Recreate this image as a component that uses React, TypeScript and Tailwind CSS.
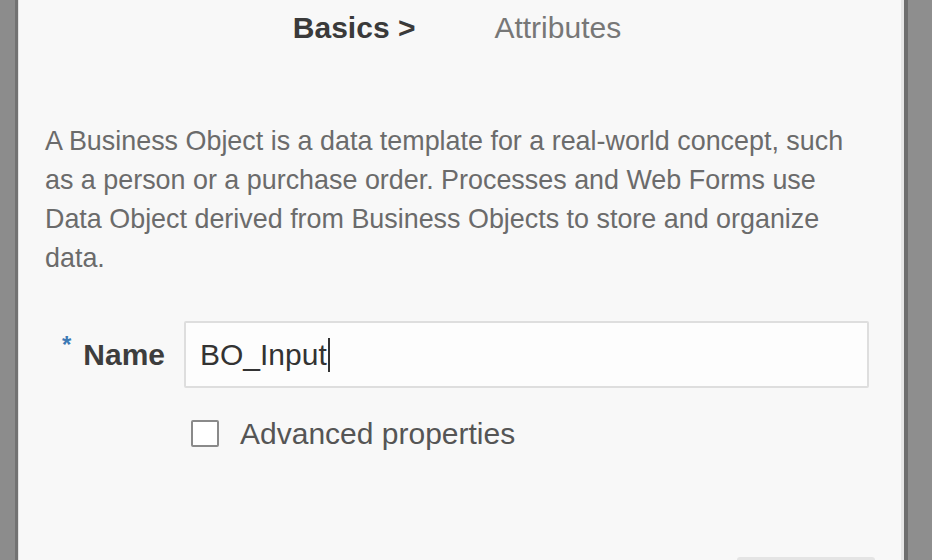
import { useState } from "react";

export default function App() {
  const [name, setName] = useState("BO_Input");
  const [advanced, setAdvanced] = useState(false);

  return (
    <div
      className="flex h-[560px] w-[932px] overflow-hidden bg-[#8e8e8e]"
      style={{ fontFamily: '"Liberation Sans", Arial, sans-serif' }}
    >
      {/* Backdrop, left */}
      <div className="w-[15px] shrink-0 bg-[#8c8c8c]" />
      <div className="w-[3px] shrink-0 bg-[#727272]" />
      <div className="w-px shrink-0 bg-[#e2e2e2]" />

      {/* Dialog */}
      <div className="flex w-[882px] shrink-0 flex-col bg-[#f8f8f8]">
        {/* Steps */}
        <div className="flex h-[56px] items-center justify-center gap-[79px] pr-[6px] text-[30px] leading-[34px]">
          <span className="font-bold text-[#3a3a3a]">Basics &gt;</span>
          <span className="text-[#777]">Attributes</span>
        </div>

        {/* Description */}
        <p className="mt-[66px] pl-[26px] pr-[30px] text-[26.9px] leading-[39px] text-[#6b6b6b]">
          A Business Object is a data template for a real-world concept, such as a person or a
          purchase order. Processes and Web Forms use Data Object derived from Business Objects to
          store and organize data.
        </p>

        {/* Name */}
        <div className="mt-[43px] flex items-center pr-[32px]">
          <label className="flex w-[165px] shrink-0 items-center justify-end pr-[19px] text-[30px] font-bold text-[#3d3d3d]">
            <span className="mr-[12px] -mt-[20px] text-[24px] leading-none text-[#3d7ab5]">*</span>
            Name
          </label>
          <div className="flex h-[67px] flex-1 items-center rounded-[2px] border-2 border-[#dedede] bg-[#fdfdfd] px-[14px]">
            <input
              value={name}
              onChange={(e) => setName(e.target.value)}
              className="w-[128px] bg-transparent text-[30px] text-[#333] outline-none"
            />
            <span className="h-[34px] w-[2px] bg-[#333]" />
          </div>
        </div>

        {/* Advanced */}
        <label className="mt-[25px] ml-[172px] flex h-[40px] items-center gap-[21px] text-[30px] text-[#555]">
          <span
            onClick={() => setAdvanced(!advanced)}
            className="flex h-[27px] w-[28px] items-center justify-center rounded-[2px] border-2 border-[#8a8a8a] bg-white"
          >
            {advanced && <span className="h-[13px] w-[13px] bg-[#555]" />}
          </span>
          Advanced properties
        </label>

        {/* Footer */}
        <div className="mt-auto flex justify-end pr-[26px]">
          <div className="h-[3px] w-[138px] rounded-t-[3px] bg-[#e4e4e4]" />
        </div>
      </div>

      {/* Backdrop, right */}
      <div className="w-[3px] shrink-0 bg-[#e6e6e6]" />
      <div className="w-[4px] shrink-0 bg-[#6e6e6e]" />
      <div className="flex-1 bg-[#8e8e8e]" />
    </div>
  );
}
